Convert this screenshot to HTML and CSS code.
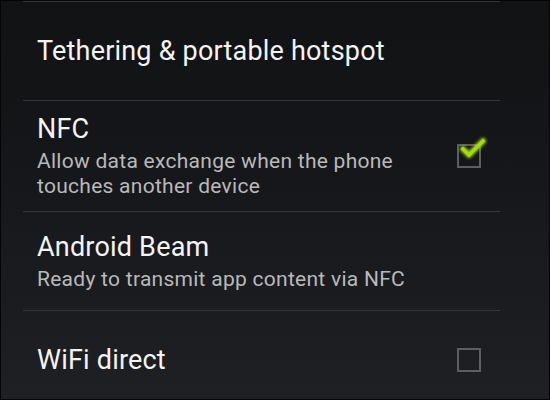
FILE: index.html
```html
<!DOCTYPE html>
<html>
<head>
<meta charset="utf-8">
<link rel="stylesheet" href="styles.css">
</head>
<body>
<div class="frame">
  <ul class="list">
    <li class="item item-short">
      <div class="text">
        <div class="title">Tethering &amp; portable hotspot</div>
      </div>
    </li>
    <li class="item item-tall">
      <div class="text">
        <div class="title">NFC</div>
        <div class="summary">Allow data exchange when the phone<br>touches another device</div>
      </div>
      <span class="checkbox">
        <svg class="check" width="34" height="30" viewBox="0 0 34 30">
          <defs>
            <filter id="glow" x="-50%" y="-50%" width="200%" height="200%">
              <feGaussianBlur stdDeviation="1.6"/>
            </filter>
          </defs>
          <polyline points="7,15 13,21 27,7" fill="none" stroke="#a8e000" stroke-width="6" stroke-linecap="round" stroke-linejoin="round" filter="url(#glow)" opacity="0.9"/>
          <polyline points="7,15 13,21 27,7" fill="none" stroke="#a4d81c" stroke-width="3.4" stroke-linecap="square" stroke-linejoin="miter"/>
        </svg>
      </span>
    </li>
    <li class="item item-mid">
      <div class="text">
        <div class="title">Android Beam</div>
        <div class="summary">Ready to transmit app content via NFC</div>
      </div>
    </li>
    <li class="item item-short">
      <div class="text">
        <div class="title">WiFi direct</div>
      </div>
      <span class="checkbox"></span>
    </li>
  </ul>
</div>
</body>
</html>
```
FILE: styles.css
```css
html, body {
  margin: 0;
  padding: 0;
  background: #000;
}
.frame {
  width: 548px;
  height: 398px;
  border: 1px solid #050505;
  overflow: hidden;
  background: linear-gradient(to bottom, #111214 0%, #16171a 45%, #1e2024 100%);
  font-family: Roboto, "Noto Sans", sans-serif;
}
.list {
  list-style: none;
  margin: 0;
  padding: 0 49px 0 22px;
}
.item {
  display: flex;
  align-items: center;
  justify-content: space-between;
  border-top: 1px solid #34363a;
  padding: 0 0 0 14px;
  box-sizing: border-box;
}
.item-short { height: 99px; }
.item-tall { height: 111px; }
.item-mid { height: 99px; }
.title {
  color: #f4f4f4;
  font-size: 27px;
  letter-spacing: 0.2px;
  line-height: 32px;
}
.summary {
  color: #b9b9b9;
  font-size: 21px;
  letter-spacing: 0.27px;
  line-height: 25px;
  margin-top: 4px;
}
.checkbox {
  position: relative;
  width: 20px;
  height: 20px;
  border: 2px solid #5c5e62;
  margin-right: 19px;
  flex: none;
}
.check {
  position: absolute;
  left: -3px;
  top: -12px;
}
```
